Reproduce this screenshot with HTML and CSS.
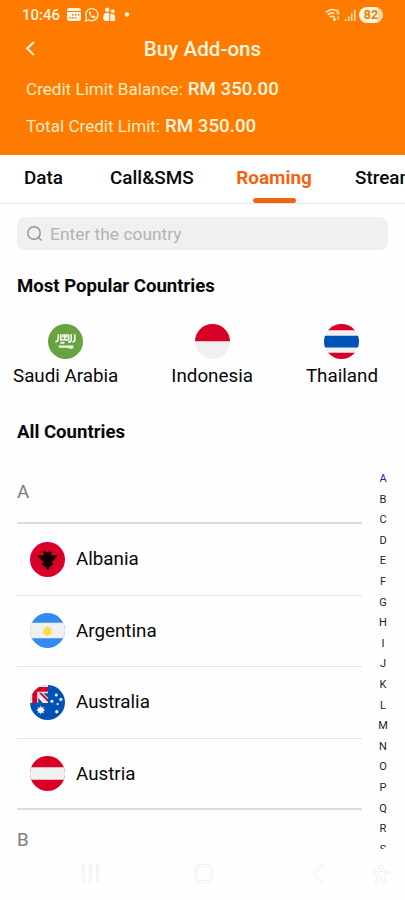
FILE: index.html
```
<!DOCTYPE html>
<html lang="en">
<head>
<meta charset="utf-8">
<meta name="viewport" content="width=device-width, initial-scale=1">
<title>Buy Add-ons</title>
<link rel="stylesheet" href="styles.css">
</head>
<body>
<header class="header">
  <div class="status">
    <span class="clock">10:46</span>
    <svg class="status-left" width="66" height="16" viewBox="0 0 66 16" fill="#fff5df">
      <path fill-rule="evenodd" d="M2.500 1h9Q14 1 14 3v1H0V3Q0 1 2.500 1ZM0 5h14v7q0 2-2 2H2q-2 0-2-2ZM5 7v1.500h1.500V7Zm3 0v1.500h1.500V7Zm3 0v1.500h1.300V7ZM2.500 10v1.500H4V10ZM5 10v1.500h1.500V10Zm3 0v1.500h1.500V10Z"/>
      <path d="M18.600 14l.9-3.300a6.100 6.100 0 1 1 2.300 2.300Z" fill="none" stroke="#fff5df" stroke-width="1.300"/>
      <path d="M22 4.500l1.300-.3.900 2-.8 1q.8 1.500 2.300 2.200l1-1 1.900 1-.3 1.200q-1.200 1.300-3.700-.2-2.300-1.900-2.600-4.200Z"/>
      <circle cx="40.200" cy="2.700" r="2.300"/><circle cx="45.700" cy="4.200" r="1.900"/>
      <path d="M38 6h4.200v8H38q-2-1-2-3 .3-4 2-5ZM43.200 7h2.700q2.200.2 2.200 2.500V13q0 1-1 1h-3.900Z"/>
      <circle cx="60" cy="7.500" r="2.200"/>
    </svg>
    <svg class="status-right" width="31" height="14" viewBox="0 0 31 14" fill="none" stroke="#ffe9bd" stroke-width="1.500">
      <path d="M.8 4.500Q6-.4 11 2.500M2.700 7Q6 3.700 9.500 5.500M4.700 9.300Q6.500 7.500 8.800 8.800"/>
      <path d="M13.800 2h-2v2q2-.5 2 1t-2 1M9.500 8.500v4M8 11l1.500 1.500L11 11M13 12V8" stroke-width="1.100"/>
      <path d="M20.700 13v-2M23.700 13V8.500M26.700 13V5.500M29.700 13V2"/>
    </svg>
    <span class="battery">82</span>
  </div>
  <div class="titlebar">
    <svg class="back" width="14" height="16" viewBox="0 0 14 16" fill="none" stroke="#fff3d6" stroke-width="2"><path d="M11 1L4 7.500l7 6.500"/></svg>
    <h1 class="title">Buy Add-ons</h1>
  </div>
  <p class="credit"><span class="credit-label">Credit Limit Balance:</span><b class="credit-value">RM 350.00</b></p>
  <p class="credit"><span class="credit-label">Total Credit Limit:</span><b class="credit-value">RM 350.00</b></p>
</header>
<nav class="tabs">
  <span class="tab data">Data</span>
  <span class="tab calls">Call&amp;SMS</span>
  <span class="tab active">Roaming</span>
  <span class="tab stream">Streaming</span>
</nav>
<main class="main">
  <div class="search">
    <svg width="18" height="18" viewBox="0 0 18 18" fill="none" stroke="#929292" stroke-width="1.400"><circle cx="8" cy="8" r="6.200"/><path d="M12.500 12.500l3 3"/></svg>
    <span class="placeholder">Enter the country</span>
  </div>
  <h2 class="heading popular-heading">Most Popular Countries</h2>
  <section class="popular">
    <div class="country">
      <svg class="flag" viewBox="0 0 34 34"><circle cx="17" cy="17" r="17" fill="#67a340"/><path d="M10 10v4.500q0 2.200-3 2.700M12.500 10v5.500h3.800V10M16.300 15.500H20V10M22.500 10v6.200q-.5 1.600-3 1.300M26 10v5.200q0 2-2.200 2.300M12 18.300h4M14.500 10v3M18 10v3" fill="none" stroke="#f7f7ed" stroke-width="1.600"/><path d="M10 21h14.500v2.300q-3 1.800-5-.3H11Z" fill="#f7f7ed"/></svg>
      <span class="country-name">Saudi Arabia</span>
    </div>
    <div class="country">
      <svg class="flag" viewBox="0 0 34 34"><path d="M0 17a17 17 0 0 1 34 0Z" fill="#d80027"/><path d="M0 17a17 17 0 0 0 34 0Z" fill="#f0f0f0"/></svg>
      <span class="country-name">Indonesia</span>
    </div>
    <div class="country">
      <svg class="flag" viewBox="0 0 34 34"><clipPath id="round"><circle cx="17" cy="17" r="17"/></clipPath><g clip-path="url(#round)"><path d="M0 0h34v34H0Z" fill="#f0f0f0"/><path d="M0 11.300h34v11.500H0Z" fill="#0052b4"/><path d="M0 0h34v6H0ZM0 28h34v6H0Z" fill="#d80027"/></g></svg>
      <span class="country-name">Thailand</span>
    </div>
  </section>
  <h2 class="heading all-heading">All Countries</h2>
  <div class="directory">
    <div class="listing">
      <div class="letter">A</div>
      <ul class="rows">
        <li class="row"><svg class="flag" viewBox="0 0 34 34"><circle cx="17" cy="17" r="17" fill="#d80027"/><path d="M14 9l3 1 3-1 1.500 1.500-1.300 2.600 6.800-.3-2 3h-1l-.5 2h-1.300l-.7 2 1.200 1.800-.5 1.200-1.400-.6-.3 1.500-2 .8v1.500l-1.500 1.200-1.500-1.200v-1.500l-2-.8-.3-1.500-1.400.6-.5-1.200 1.200-1.800-.7-2h-1.300L10 15.800H9l-2-3 6.800.3-1.300-2.600Z" fill="#160000"/></svg><span>Albania</span></li>
        <li class="row"><svg class="flag" viewBox="0 0 34 34"><g clip-path="url(#round)"><path d="M0 0h34v34H0Z" fill="#338af3"/><path d="M0 9.500h34v15H0Z" fill="#f0f0f0"/><path d="M17 12.500l1.100 1.700 2-.6-.2 2.100 2 .6-1.400 1.500 1.200 1.600-2.100.3.200 2.100-1.900-.7-.9 1.700-1.100-1.700-2 .7.200-2.100-2-.3 1.300-1.600-1.400-1.500 2-.6-.1-2.100 2 .6Z" fill="#ffda44"/></g></svg><span>Argentina</span></li>
        <li class="row"><svg class="flag" viewBox="0 0 34 34"><g clip-path="url(#round)"><path d="M0 0h34v34H0Z" fill="#0052b4"/><path d="M0 0h17.500v17.500H0Z" fill="#f0f0f0"/><path d="M0 2h17.500v4.500H7v11H2.200V2ZM8.500 7.500l9 9v-3L11 7.500Z" fill="#d80027"/><path d="M13 8h4.500v4.500ZM8 12.500l4.500 5H8Z" fill="#0052b4"/><path d="M10.500 20l1 2 2.100-.6-.7 2 2 1-2 1 .7 2-2.100-.7-1 2-1-2-2.100.7.7-2-2-1 2-1-.7-2 2.100.6Z" fill="#f0f0f0"/><g fill="#f0f0f0"><circle cx="21.300" cy="15.800" r="1.500"/><circle cx="25.500" cy="9.700" r="1.500"/><circle cx="30" cy="14" r="1.500"/><circle cx="26.800" cy="18.500" r="1.100"/><circle cx="26" cy="26" r="1.600"/></g></g></svg><span>Australia</span></li>
        <li class="row"><svg class="flag" viewBox="0 0 34 34"><g clip-path="url(#round)"><path d="M0 0h34v34H0Z" fill="#d80027"/><path d="M0 11h34v12H0Z" fill="#f0f0f0"/></g></svg><span>Austria</span></li>
      </ul>
      <div class="letter next">B</div>
    </div>
    <aside class="index"><span class="current">A</span><span>B</span><span>C</span><span>D</span><span>E</span><span>F</span><span>G</span><span>H</span><span>I</span><span>J</span><span>K</span><span>L</span><span>M</span><span>N</span><span>O</span><span>P</span><span>Q</span><span>R</span><span>S</span></aside>
  </div>
</main>
<footer class="navigation">
  <svg width="405" height="50" viewBox="0 0 405 50" fill="none" stroke="#f0f0f0" stroke-width="1"><path d="M82.500 14.500h2v17h-2ZM89.500 14.500h2v17h-2ZM96.500 14.500h2v17h-2Z"/><rect x="194.500" y="14.500" width="18" height="18" rx="5"/><rect x="196.500" y="16.500" width="14" height="14" rx="3"/><path d="M321 14.500l2 1.500-8 7.500 8 7.500-2 1.500-9-9Z"/><circle cx="381" cy="17.500" r="2.500"/><path d="M373.500 20.500l5 1h5l5-1 .5 2-5 1v3l3 6-2 1-4-6-4 6-2-1 3-6v-3l-5-1Z"/></svg>
</footer>
</body>
</html>
```
FILE: styles.css
```
* { box-sizing: border-box; }
body { margin: 0; width: 405px; height: 900px; overflow: hidden; background: #fefefe; color: #080808; font-family: Roboto, "Liberation Sans", sans-serif; display: flex; flex-direction: column; }
h1, h2, p, ul { margin: 0; padding: 0; list-style: none; }
svg { display: block; flex: none; }

.header { height: 155px; flex: none; background: #ff7b00; color: #fff6df; }
.status { height: 30px; display: flex; align-items: center; padding: 0 22px 0 22px; }
.clock { width: 38px; margin-right: 7px; font-size: 15px; font-weight: 500; }
.status-right { margin-left: auto; margin-right: 3px; }
.battery { width: 24px; height: 16px; border-radius: 8px; background: linear-gradient(90deg, #fff5df 80%, #ffd5a1 80%); color: #ef7b00; font-size: 12.500px; font-weight: 700; line-height: 16px; text-align: center; }
.titlebar { height: 38px; display: grid; grid-template-columns: 25px 1fr 25px; align-items: center; padding: 0 23px; }
.title { font-size: 20.600px; font-weight: 500; text-align: center; }
.credit { height: 37px; padding-left: 26px; display: flex; align-items: center; gap: 5px; transform: translateY(2px); }
.credit-label { font-size: 17.100px; color: #ffecc2; }
.credit-value { font-size: 18.700px; font-weight: 500; }

.tabs { height: 49px; flex: none; display: flex; overflow: hidden; background: #fff; border-bottom: 1px solid #e4e4e4; padding-left: 24px; font-size: 18.900px; font-weight: 500; line-height: 46px; }
.tab { flex: none; }
.data { width: 86px; }
.calls { width: 126px; }
.active { width: 76px; margin-right: 43px; color: #f26411; font-weight: 700; display: flex; flex-direction: column; align-items: center; }
.active::after { content: ""; width: 43px; height: 5px; flex: none; border-radius: 3px; background: #f26411; margin-top: -3px; }

.main { flex: none; height: 646px; padding-top: 13px; }
.search { margin: 0 17px; height: 33px; border-radius: 8px; background: #f0f0f0; display: flex; align-items: center; padding-left: 9px; gap: 6px; }
.placeholder { color: #b3b3b3; font-size: 17.400px; }
.heading { margin-left: 17px; font-size: 18.600px; font-weight: 700; line-height: 24px; }
.popular-heading { margin-top: 24px; }
.popular { display: flex; justify-content: space-between; margin: 26px 27px 0 13px; }
.country { display: flex; flex-direction: column; align-items: center; gap: 5px; }
.flag { width: 35px; height: 35px; }
.country-name { font-size: 18.800px; line-height: 24px; }
.all-heading { margin-top: 32px; }
.directory { display: flex; height: 405px; overflow: hidden; padding-top: 1px; }
.listing { width: 345px; margin-left: 17px; }
.letter { height: 79px; padding-top: 35px; border-bottom: 2px solid #dcdcdc; color: #7d7d7d; font-size: 18.800px; line-height: 24px; }
.row { height: 71.600px; border-bottom: 1px solid #e5e5e5; padding-left: 13px; display: flex; align-items: center; gap: 11px; font-size: 18.800px; }
.row:last-child { border-bottom: 2px solid #dcdcdc; }
.next { padding-top: 18px; border: 0; }
.index { width: 20px; margin: 24px 0 0 11px; display: flex; flex-direction: column; align-items: center; font-size: 11px; line-height: 20.600px; color: #242424; }
.current { color: #3016b7; }
.navigation { height: 50px; flex: none; }
```
